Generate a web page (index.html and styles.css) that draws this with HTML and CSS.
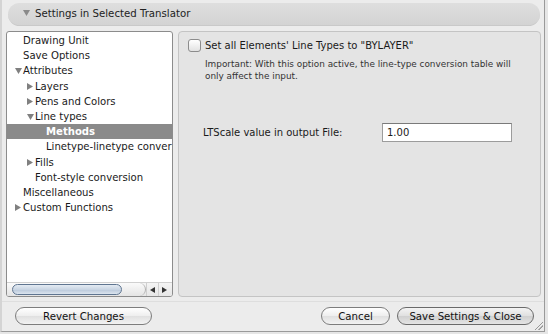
FILE: index.html
```html
<!DOCTYPE html>
<html>
<head>
<meta charset="utf-8">
<link rel="stylesheet" href="styles.css">
</head>
<body>
<div class="window">
  <div class="header">
    <div class="pill">
      <svg class="tri-down hdr" width="7" height="6" viewBox="0 0 7 6"><polygon points="0,0 7,0 3.5,6" /></svg>
      <span class="title">Settings in Selected Translator</span>
    </div>
  </div>
  <div class="main">
    <div class="tree">
      <div class="rows">
        <div class="row l0"><span class="disc"></span><span>Drawing Unit</span></div>
        <div class="row l0"><span class="disc"></span><span>Save Options</span></div>
        <div class="row l0"><span class="disc"><svg width="7" height="6" viewBox="0 0 7 6"><polygon points="0,0 7,0 3.5,6" /></svg></span><span>Attributes</span></div>
        <div class="row l1"><span class="disc"><svg width="6" height="7" viewBox="0 0 6 7"><polygon points="0,0 6,3.5 0,7" /></svg></span><span>Layers</span></div>
        <div class="row l1"><span class="disc"><svg width="6" height="7" viewBox="0 0 6 7"><polygon points="0,0 6,3.5 0,7" /></svg></span><span>Pens and Colors</span></div>
        <div class="row l1"><span class="disc"><svg width="7" height="6" viewBox="0 0 7 6"><polygon points="0,0 7,0 3.5,6" /></svg></span><span>Line types</span></div>
        <div class="row l2 selected"><span class="disc"></span><span>Methods</span></div>
        <div class="row l2"><span class="disc"></span><span>Linetype-linetype conversion</span></div>
        <div class="row l1"><span class="disc"><svg width="6" height="7" viewBox="0 0 6 7"><polygon points="0,0 6,3.5 0,7" /></svg></span><span>Fills</span></div>
        <div class="row l1"><span class="disc"></span><span>Font-style conversion</span></div>
        <div class="row l0"><span class="disc"></span><span>Miscellaneous</span></div>
        <div class="row l0"><span class="disc"><svg width="6" height="7" viewBox="0 0 6 7"><polygon points="0,0 6,3.5 0,7" /></svg></span><span>Custom Functions</span></div>
      </div>
      <div class="hscroll">
        <div class="track"><div class="thumb"></div></div>
        <div class="arrow"><svg width="5" height="6" viewBox="0 0 5 6"><polygon points="5,0 0,3 5,6" /></svg></div>
        <div class="arrow"><svg width="5" height="6" viewBox="0 0 5 6"><polygon points="0,0 5,3 0,6" /></svg></div>
      </div>
    </div>
    <div class="panel">
      <label class="check-row"><span class="checkbox"></span><span>Set all Elements' Line Types to "BYLAYER"</span></label>
      <p class="note">Important: With this option active, the line-type conversion table will only affect the input.</p>
      <div class="field-row">
        <span class="field-label">LTScale value in output File:</span>
        <span class="input">1.00</span>
      </div>
    </div>
  </div>
  <div class="footer">
    <button class="btn revert">Revert Changes</button>
    <div class="spacer"></div>
    <button class="btn cancel">Cancel</button>
    <button class="btn save">Save Settings &amp; Close</button>
  </div>
  <div class="grip"></div>
</div>
</body>
</html>
```
FILE: styles.css
```css
* { box-sizing: border-box; }
html, body { margin: 0; padding: 0; }
body {
  width: 548px; height: 334px; overflow: hidden;
  background: #e6e6e6;
  font-family: "DejaVu Sans", sans-serif;
  color: #1a1a1a;
}
.window {
  position: relative;
  width: 545px; height: 332px;
  background: #ececec;
  border-right: 1px solid #9a9a9a;
  border-bottom: 1px solid #9a9a9a;
  border-left: 2px solid #d4d4d4;
  display: flex; flex-direction: column;
}
.header { padding: 3px 4px 0 6px; }
.pill {
  height: 23px;
  border-radius: 12px;
  background: linear-gradient(#dedede, #d3d3d3);
  border-bottom: 1px solid #c9c9c9;
  display: flex; align-items: center;
  padding-left: 15px;
}
.pill svg { fill: #8a8a8a; margin-right: 5px; margin-top: -2px; }
.title { font-size: 10.2px; color: #222; margin-top: -2px; }

.main {
  display: flex; gap: 5px;
  margin-top: 5px;
  padding: 0 3px 0 4px;
  height: 266px;
}
.tree {
  width: 167px;
  background: #fff;
  border: 1px solid #8c8c8c;
  border-radius: 3px;
  display: flex; flex-direction: column;
  overflow: hidden;
}
.rows { flex: 1; padding-top: 1px; }
.row {
  height: 15.2px;
  display: flex; align-items: center;
  font-size: 10.1px;
  white-space: nowrap;
  overflow: hidden;
}
.disc { width: 8px; height: 8px; display: inline-flex; align-items: center; justify-content: center; margin-right: 1px; flex: none; }
.disc svg { fill: #808080; }
.l0 { padding-left: 7px; }
.l1 { padding-left: 19px; }
.l2 { padding-left: 30px; }
.selected { background: #8a8a8a; color: #fff; font-weight: bold; }

.hscroll {
  height: 14px;
  display: flex;
  border-top: 1px solid #d0d0d0;
  background: linear-gradient(#f4f4f4, #e6e6e6);
}
.track {
  width: 139px;
  padding: 1px 0 1px 5px;
  border-right: 1px solid #b0b0b0;
  border-radius: 0 7px 7px 0;
  background: linear-gradient(#fafafa, #e4e4e4);
}
.thumb {
  width: 110px; height: 11px;
  border-radius: 6px;
  border: 1px solid #5f7590;
  background: linear-gradient(#e4ebf3, #c9d5e3 50%, #b9c8da 51%, #dbe4ee);
}
.arrow {
  width: 12px;
  display: flex; align-items: center; justify-content: center;
  border-left: 1px solid #cfcfcf;
}
.arrow svg { fill: #333; }

.panel {
  flex: 1;
  background: #e4e4e4;
  border: 1px solid #c4c4c4;
  border-radius: 4px;
  padding: 7px 0 0 9px;
}
.check-row { display: flex; align-items: center; font-size: 10px; gap: 4px; }
.checkbox {
  width: 13px; height: 13px;
  border: 1px solid #8c8c8c;
  border-radius: 3px;
  background: linear-gradient(#ffffff, #e2e2e2);
}
.note {
  margin: 6px 0 0 17px;
  font-size: 8.9px; line-height: 12px;
  color: #333;
  width: 318px;
}
.field-row {
  display: flex; align-items: center;
  margin-top: 41px;
  padding-left: 15px;
}
.field-label { font-size: 10px; width: 179px; }
.input {
  width: 130px; height: 19px;
  background: #fff;
  border: 1px solid #9c9c9c;
  border-top-color: #7a7a7a;
  font-size: 10px;
  padding: 3px 4px;
}

.footer {
  display: flex; align-items: center;
  padding: 0 10px 0 13px;
  border-top: 1px solid #dedede;
  margin-top: 4px;
  height: 29px;
  gap: 7px;
}
.spacer { flex: 1; }
.btn {
  height: 18px;
  border: 1px solid #7d7d7d;
  border-radius: 9px;
  background: linear-gradient(#ffffff, #eeeeee 50%, #e0e0e0 51%, #f2f2f2);
  font-family: "DejaVu Sans", sans-serif;
  font-size: 10.2px;
  color: #111;
  padding: 0;
}
.revert { width: 137px; }
.cancel { width: 69px; }
.save { width: 137px; border-color: #6a6a6a; background: linear-gradient(#f4f4f4, #e0e0e0 50%, #d0d0d0 51%, #e4e4e4); }
.grip {
  position: absolute; right: 1px; bottom: 1px;
  width: 8px; height: 8px;
  background: linear-gradient(135deg, transparent 45%, #999 46%, #999 52%, transparent 53%, transparent 68%, #999 69%, #999 75%, transparent 76%);
}
```
